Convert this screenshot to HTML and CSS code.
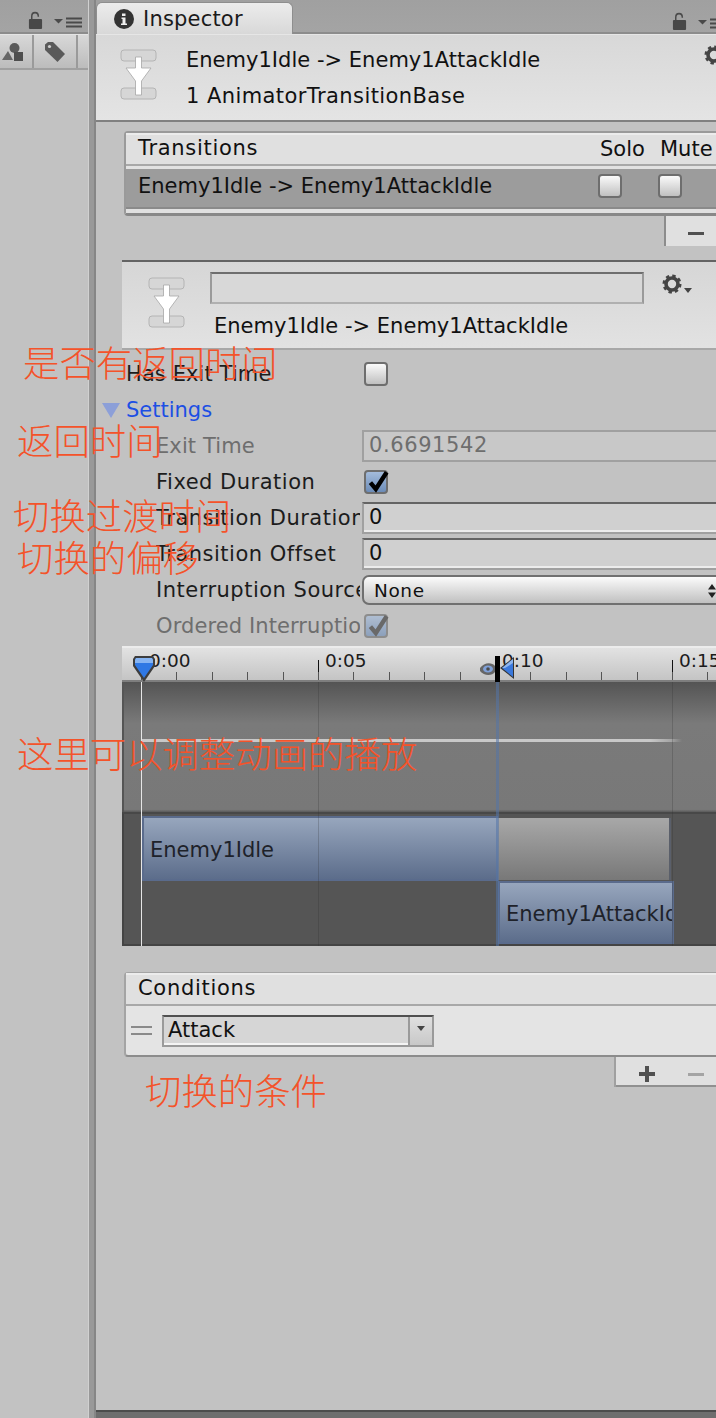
FILE: index.html
```html
<!DOCTYPE html>
<html lang="zh">
<head>
<meta charset="utf-8">
<title>Inspector</title>
<link rel="stylesheet" href="styles.css">
</head>
<body>
<svg class="defs" width="0" height="0" aria-hidden="true">
  <symbol id="lock" viewBox="0 0 16 20"><path d="M4 9V5.500C4 3 5.600 1.600 7.500 1.600S11 3 11 5.500V6" fill="none" stroke="#4a4a4a" stroke-width="1.600"/><rect x="1" y="8.500" width="14" height="10.500" rx="1" fill="#484848"/></symbol>
  <symbol id="menu" viewBox="0 0 28 12"><path d="M0 2h9L4.500 6.500z" fill="#4a4a4a"/><path d="M12 1.500h16M12 5.500h16M12 9.500h16" stroke="#4a4a4a" stroke-width="2"/></symbol>
  <symbol id="trans" viewBox="0 0 38 52"><rect x="1" y="1" width="35" height="11" rx="3" fill="#d6d6d6" stroke="#b4b4b4"/><rect x="1" y="39" width="35" height="11" rx="3" fill="#d6d6d6" stroke="#b4b4b4"/><path d="M6 19h9.500V8h6v11H31l-9.500 13v14h-6V32z" fill="#fff" stroke="#a6a6a6" stroke-width=".8"/></symbol>
  <symbol id="gear" viewBox="0 0 20 20"><circle cx="10" cy="10" r="6" fill="none" stroke="#444" stroke-width="3.600"/><circle cx="10" cy="10" r="8.200" fill="none" stroke="#444" stroke-width="2.600" stroke-dasharray="3.400 3.040"/></symbol>
  <symbol id="tick" viewBox="0 0 24 24"><path d="M5 12.500l5 6L20 3" fill="none" stroke="currentColor" stroke-width="4"/></symbol>
</svg>

<div class="window">
  <aside class="left">
    <div class="bar left-bar">
      <svg class="ico-lock"><use href="#lock"/></svg>
      <svg class="ico-menu"><use href="#menu"/></svg>
    </div>
    <div class="toolbar">
      <div class="tool tool-a">
        <svg class="ico-tool" viewBox="0 0 22 20"><path d="M0 18l6-9 5 9z" fill="#666"/><circle cx="12.500" cy="6" r="5" fill="#5a5a5a"/><rect x="12" y="10" width="9" height="9" fill="#4e4e4e"/></svg>
      </div>
      <div class="tool tool-b">
        <svg class="ico-tool" viewBox="0 0 22 22"><path d="M1 3.500L4 1h5l12 12-7.500 8L1 9z" fill="#5a5a5a"/><circle cx="5.500" cy="5.500" r="1.600" fill="#d0d0d0"/></svg>
      </div>
    </div>
  </aside>

  <div class="divider"></div>

  <main class="inspector">
    <div class="bar tabs">
      <div class="tab">
        <svg class="ico-info" viewBox="0 0 20 20"><circle cx="10" cy="10" r="10" fill="#333"/><path d="M8 4.500h3.500v2.500H8zM7.500 8.500h4v6H13V16H7v-1.500h1.500v-4.500h-1z" fill="#eee"/></svg>
        <span class="tab-label">Inspector</span>
      </div>
      <div class="tab-tools">
        <svg class="ico-lock"><use href="#lock"/></svg>
        <svg class="ico-menu"><use href="#menu"/></svg>
      </div>
    </div>

    <header class="head">
      <svg class="ico-trans"><use href="#trans"/></svg>
      <div class="head-text">
        <div class="line">Enemy1Idle -&gt; Enemy1AttackIdle</div>
        <div class="line line-wide">1 AnimatorTransitionBase</div>
      </div>
      <svg class="ico-gear head-gear"><use href="#gear"/></svg>
    </header>

    <section class="list list-trans">
      <div class="list-head">
        <span class="list-title">Transitions</span>
        <span class="col col-solo">Solo</span>
        <span class="col col-mute">Mute</span>
      </div>
      <div class="list-row">
        <span class="line">Enemy1Idle -&gt; Enemy1AttackIdle</span>
        <span class="check check-solo"></span>
        <span class="check check-mute"></span>
      </div>
      <div class="list-end"></div>
    </section>
    <div class="foot foot-trans"><span class="minus"></span></div>

    <section class="sub">
      <svg class="ico-trans"><use href="#trans"/></svg>
      <div class="sub-main">
        <div class="sub-top">
          <div class="name-field"></div>
          <svg class="ico-gear"><use href="#gear"/></svg>
          <span class="gear-arrow"></span>
        </div>
        <div class="line">Enemy1Idle -&gt; Enemy1AttackIdle</div>
      </div>
    </section>

    <section class="form">
      <div class="row row-top"><span class="label">Has Exit Time</span><span class="check"></span></div>
      <div class="row row-fold"><span class="fold"></span><span class="settings">Settings</span></div>
      <div class="row"><span class="label off">Exit Time</span><div class="field field-off">0.6691542</div></div>
      <div class="row"><span class="label">Fixed Duration</span><span class="check on"><svg class="ico-tick"><use href="#tick"/></svg></span></div>
      <div class="row"><span class="label">Transition Duration</span><div class="field">0</div></div>
      <div class="row"><span class="label">Transition Offset</span><div class="field">0</div></div>
      <div class="row"><span class="label">Interruption Source</span><div class="popup">None<svg class="ico-updown" viewBox="0 0 8 14"><path d="M4 0l4 5.500H0zM4 14l4-5.500H0z" fill="#222"/></svg></div></div>
      <div class="row"><span class="label off">Ordered Interruption</span><span class="check on dim"><svg class="ico-tick"><use href="#tick"/></svg></span></div>
    </section>

    <section class="timeline">
      <div class="ruler">
        <span class="time t0">0:00</span>
        <span class="time t5">0:05</span>
        <span class="time t10">0:10</span>
        <span class="time t15">0:15</span>
        <span class="major m5"></span>
        <span class="major m15"></span>
        <div class="ticks"></div>
      </div>
      <div class="graph">
        <div class="wave"></div>
      </div>
      <div class="clips">
        <div class="track">
          <div class="clip clip-a">Enemy1Idle</div>
          <div class="blend"></div>
        </div>
        <div class="track track-b">
          <div class="clip clip-b">Enemy1AttackIdle</div>
        </div>
      </div>
      <span class="vline v5"></span>
      <span class="vline v15"></span>
      <span class="vline vblue"></span>
      <span class="vline vwhite"></span>
      <svg class="playhead" viewBox="0 0 24 28"><path d="M3 1h18l2 3v7L12 27 1 11V4z" fill="#3d3d3d"/><path d="M4 3h16l1 2v5l-9 13L3 10V5z" fill="#2f78e4"/><path d="M4 3h16l1 2v3H3V5z" fill="#86b4f2"/></svg>
      <svg class="marker" viewBox="0 0 34 26"><path d="M0 12c4-6 12-6 15-2v6c-3 4-11 4-15-1z" fill="#666"/><ellipse cx="8" cy="13" rx="5" ry="3.500" fill="#7fa0d8"/><circle cx="8" cy="13" r="1.800" fill="#4a4a4a"/><path d="M34 1v22L20 12z" fill="#333"/><path d="M33 3v18L22 12z" fill="#3a78dc"/><path d="M33 3v4l-8 5-3 0z" fill="#8db5ef"/><rect x="15" y="0" width="5" height="26" fill="#000"/></svg>
    </section>

    <section class="list list-cond">
      <div class="list-head"><span class="list-title">Conditions</span></div>
      <div class="cond-row">
        <span class="handle"></span>
        <div class="combo">
          <span class="combo-text">Attack</span>
          <span class="combo-btn"><span class="combo-arrow"></span></span>
        </div>
      </div>
    </section>
    <div class="foot foot-cond">
      <svg class="ico-plus" viewBox="0 0 18 18"><path d="M7 1h4v6h6v4h-6v6H7v-6H1V7h6z" fill="#505050"/></svg>
      <span class="minus minus-off"></span>
    </div>

    <div class="spacer"></div>
    <div class="status"></div>
  </main>

  <span class="note n1">是否有返回时间</span>
  <span class="note n2">返回时间</span>
  <span class="note n3">切换过渡时间</span>
  <span class="note n4">切换的偏移</span>
  <span class="note n5">这里可以调整动画的播放</span>
  <span class="note n6">切换的条件</span>
</div>
</body>
</html>
```
FILE: styles.css
```css
* { box-sizing: border-box; }
html, body { margin: 0; padding: 0; }
body {
  width: 716px;
  height: 1418px;
  overflow: hidden;
  background: #c2c2c2;
  font-family: "DejaVu Sans", "Noto Sans CJK SC", sans-serif;
  font-size: 21px;
  color: #111;
}
.defs { position: absolute; }
.window { position: relative; display: flex; width: 716px; height: 1418px; overflow: hidden; }

.bar { height: 34px; background: linear-gradient(#a0a0a0, #a4a4a4); display: flex; }

/* left panel */
.left { width: 88px; flex: none; display: flex; flex-direction: column; background: #c2c2c2; }
.left-bar { align-items: flex-end; padding: 0 6px 2px 28px; justify-content: space-between; border-bottom: 2px solid #8c8c8c; }
.ico-lock { width: 15px; height: 19px; display: block; flex: none; }
.ico-menu { width: 28px; height: 12px; display: block; flex: none; margin-bottom: 1px; }
.toolbar {
  height: 36px; display: flex; justify-content: flex-end;
  background: linear-gradient(#d8d8d8, #bcbcbc);
  border-top: 1px solid #e4e4e4;
  border-bottom: 2px solid #a0a0a0;
  padding-right: 10px;
}
.tool { width: 44px; height: 100%; display: flex; align-items: center; justify-content: center; border-right: 2px solid #9a9a9a; flex: none; }
.tool-a { width: 33px; justify-content: flex-start; padding-left: 1px; }
.ico-tool { width: 22px; height: 22px; display: block; }

.divider {
  width: 8px; flex: none;
  background: linear-gradient(90deg, #d0d0d0 0 1px, #999 1px 6px, #868686 6px 8px);
}

/* inspector */
.inspector { flex: 1; min-width: 0; display: flex; flex-direction: column; overflow: hidden; }
.tabs { position: relative; justify-content: space-between; border-bottom: 2px solid #8c8c8c; }
.tab {
  width: 197px; height: 32px; margin-top: 2px; padding-left: 17px;
  display: flex; align-items: center; gap: 9px; flex: none;
  background: linear-gradient(#ececec, #d8d8d8);
  border: 1px solid #8e8e8e; border-bottom: none;
  border-radius: 6px 6px 0 0;
}
.ico-info { width: 20px; height: 20px; display: block; flex: none; }
.tab-label { letter-spacing: .2px; color: #1a1a1a; line-height: 28px; }
.tab-tools { width: 44px; display: flex; align-items: flex-end; gap: 11px; padding-bottom: 1px; flex: none; }

.line { line-height: 36px; white-space: nowrap; letter-spacing: .02px; }
.line-wide { letter-spacing: .42px; }
.head {
  position: relative; height: 88px; flex: none; display: flex;
  padding: 7px 0 0 24px; gap: 28px;
  background: linear-gradient(#d8d8d8, #e4e4e4);
  border-top: 1px solid #e6e6e6;
  border-bottom: 2px solid #808080;
}
.ico-trans { width: 38px; height: 52px; display: block; flex: none; }
.head .ico-trans { margin-top: 7px; }
.ico-gear { width: 20px; height: 20px; display: block; flex: none; }
.head-gear { position: absolute; right: -8px; top: 10px; }

.list { flex: none; margin-left: 28px; width: 640px; }
.list-trans {
  margin-top: 9px; border: 2px solid #9a9a9a; border-right: none; border-bottom: 3px solid #888;
  border-radius: 4px 0 0 4px; background: #e2e2e2;
}
.list-head {
  height: 33px; display: flex; align-items: center; position: relative; padding: 0 0 3px 12px;
  background: #e0e0e0; border-top: 2px solid #ececec; border-bottom: 2px solid #a8a8a8;
}
.list-title { letter-spacing: .7px; }
.col { position: absolute; top: 0; line-height: 29px; }
.col-solo { left: 474px; }
.col-mute { left: 534px; }
.list-row {
  height: 40px; margin-top: 3px; padding: 0 0 4px 12px; position: relative; display: flex; align-items: center;
  background: #9c9c9c; border-bottom: 2px solid #8a8a8a;
}
.list-end { height: 4px; background: #e0e0e0; }
.check {
  width: 24px; height: 24px; display: block; flex: none;
  background: linear-gradient(#fafafa, #c0c0c0);
  border: 2px solid #6e6e6e; border-radius: 4px;
}
.check-solo, .check-mute { position: absolute; top: 5px; }
.check-solo { left: 472px; }
.check-mute { left: 532px; }
.check.on { background: linear-gradient(#a4bcdc, #6c8cb8); color: #000; position: relative; }
.check.dim { opacity: .62; color: #333; }
.ico-tick { position: absolute; left: -1px; top: -3px; width: 26px; height: 26px; display: block; }

.foot { flex: none; align-self: flex-end; background: #e0e0e0; position: relative; display: flex; align-items: center; }
.foot-trans { width: 50px; height: 30px; padding: 5px 0 0 22px; box-shadow: -2px 0 0 #8c8c8c; }
.minus { width: 16px; height: 3px; background: #505050; display: block; flex: none; }
.minus-off { background: #a4a4a4; }

.sub {
  margin: 14px 0 0 26px; height: 90px; width: 600px; flex: none; display: flex;
  padding: 15px 0 0 26px; gap: 24px;
  background: linear-gradient(#d6d6d6, #e2e2e2);
  border-top: 2px solid #636363; border-bottom: 2px solid #a8a8a8;
}
.sub .ico-trans { margin-top: 0; }
.sub-main { display: flex; flex-direction: column; }
.sub-top { display: flex; align-items: flex-start; margin-top: -5px; height: 36px; position: relative; }
.name-field {
  width: 434px; height: 32px; background: #d8d8d8;
  border: 2px solid #9a9a9a; border-top-color: #6e6e6e; border-bottom-color: #b0b0b0;
}
.sub-top .ico-gear { margin: 2px 0 0 18px; }
.gear-arrow { width: 0; height: 0; margin: 16px 0 0 2px; border: 4px solid transparent; border-top: 5px solid #444; border-bottom: 0; }
.sub .line { padding-left: 4px; }

.form { margin-top: 6px; flex: none; display: flex; flex-direction: column; }
.row { height: 36px; display: flex; align-items: center; flex: none; padding-left: 60px; }
.row-top { padding-left: 30px; }
.label { width: 204px; margin-right: 2px; flex: none; overflow: hidden; white-space: nowrap; color: #1c1c1c; letter-spacing: .5px; }
.row-top .label { width: 234px; letter-spacing: .1px; }
.row-fold { padding-left: 6px; }
.label.off { color: #6e6e6e; letter-spacing: .1px; }
.row .check { margin-left: 2px; }
.fold { width: 0; height: 0; border-left: 9px solid transparent; border-right: 9px solid transparent; border-top: 15px solid #8c9fd8; flex: none; }
.settings { margin-left: 6px; color: #1c4fe4; }
.field {
  width: 400px; height: 32px; flex: none; line-height: 27px; padding-left: 5px;
  background: #d0d0d0; color: #111;
  border: 2px solid #a0a0a0; border-top-color: #646464;
  box-shadow: inset 0 -2px 0 #ececec; letter-spacing: .2px;
}
.field-off { background: #c8c8c8; color: #6e6e6e; border-color: #a0a0a0; box-shadow: none; letter-spacing: .6px; }
.popup {
  width: 360px; height: 30px; flex: none; position: relative; display: flex; align-items: center; padding-left: 10px;
  font-size: 18.500px; letter-spacing: .6px;
  background: linear-gradient(#fbfbfb, #c0c0c0);
  border: 2px solid #707070; border-radius: 7px;
}
.ico-updown { position: absolute; right: 4px; top: 7px; width: 8px; height: 14px; }

/* timeline */
.timeline {
  position: relative; margin: 2px 0 0 26px; width: 620px; height: 300px; flex: none;
  display: flex; flex-direction: column;
}
.ruler {
  position: relative; height: 36px; flex: none;
  background: linear-gradient(#ececec 0 2px, #e2e2e2 2px, #c4c4c4);
  border-bottom: 2px solid #7e7e7e;
}
.time { position: absolute; top: 3px; font-size: 18.500px; line-height: 24px; color: #1c1c1c; }
.t0 { left: 27px; } .t5 { left: 203px; } .t10 { left: 380px; } .t15 { left: 557px; }
.major { position: absolute; top: 14px; bottom: 0; width: 1px; background: #111; }
.m5 { left: 196px; } .m15 { left: 550px; }
.ticks {
  position: absolute; left: 19px; right: 0; bottom: 0; height: 8px;
  background: repeating-linear-gradient(90deg, #555 0 1px, transparent 1px 35.400px);
}
.graph {
  position: relative; height: 130px; flex: none;
  background: linear-gradient(#545454, #7a7a7a 32%, #787878 98%, #5a5a5a);
  border-left: 2px solid #555;
}
.wave {
  position: absolute; left: 18px; width: 540px; top: 57px; height: 3px;
  background: linear-gradient(90deg, #c8c8c8 0 94%, #a4a4a4 98%, #7a7a7a);
}
.clips {
  flex: 1; min-height: 0; display: flex; flex-direction: column; background: #555; padding: 2px 0 0 18px;
  border-left: 2px solid #444; border-bottom: 2px solid #444; border-top: 2px solid #484848;
}
.track { height: 65px; display: flex; flex: none; }
.track-b { padding-left: 356px; height: 63px; }
.clip {
  display: flex; align-items: center; color: #1e222a; overflow: hidden; white-space: nowrap;
  background: linear-gradient(#97a6bd, #5c6d8b);
  border: 2px solid #5a6b8c;
  flex: none;
}
.clip-a { width: 356px; border-right: none; padding: 3px 0 0 6px; }
.clip-b { width: 176px; padding: 3px 0 0 6px; }
.blend {
  width: 173px; height: 62px; margin-top: 2px; flex: none;
  background: linear-gradient(#a8a8a8, #787878);
  border-right: 2px solid #5a5f6a;
}
.vline { position: absolute; top: 36px; bottom: 0; width: 1px; background: rgba(40,40,40,.22); }
.v5 { left: 196px; } .v15 { left: 550px; }
.vblue { left: 374px; width: 3px; background: rgba(84,116,168,.55); }
.vwhite { left: 19px; background: #e6e6e6; }
.playhead { position: absolute; left: 10px; top: 9px; width: 24px; height: 28px; }
.marker { position: absolute; left: 358px; top: 10px; width: 34px; height: 26px; }

/* conditions */
.list-cond {
  margin-top: 26px; height: 85px; background: #e4e4e4;
  border-top: 1px solid #a4a4a4; border-left: 2px solid #a4a4a4; border-bottom: 2px solid #8c8c8c;
  border-radius: 4px 0 0 4px;
}
.cond-row { display: flex; align-items: flex-start; padding: 9px 0 0 5px; }
.handle { width: 21px; height: 9px; margin-top: 11px; border-top: 2px solid #8a8a8a; border-bottom: 2px solid #8a8a8a; flex: none; }
.combo {
  margin-left: 10px; width: 272px; height: 32px; flex: none; display: flex;
  border: 2px solid #9a9a9a; border-top-color: #505050; background: #d6d6d6;
}
.combo-text { flex: 1; padding-left: 4px; line-height: 26px; box-shadow: inset 0 -2px 0 #f4f4f4; }
.combo-btn { width: 24px; flex: none; background: linear-gradient(#e0e0e0, #c8c8c8); border-left: 2px solid #9a9a9a; display: flex; justify-content: center; padding-top: 9px; }
.combo-arrow { width: 0; height: 0; border: 4px solid transparent; border-top: 5px solid #444; border-bottom: 0; }
.foot-cond {
  width: 100px; height: 30px; padding: 6px 0 0 22px; gap: 32px;
  border-bottom: 2px solid #909090; box-shadow: -2px 0 0 #a0a0a0;
}
.ico-plus { width: 18px; height: 18px; display: block; flex: none; }

.spacer { flex: 1; }
.status { height: 8px; flex: none; background: #6e6e6e; border-top: 2px solid #4c4c4c; }

/* annotations laid over the screenshot */
.note {
  position: absolute; font-family: "Noto Sans CJK SC", sans-serif; font-size: 36.400px; font-weight: 300;
  line-height: 44px; color: #f4532a; white-space: nowrap;
}
.n1 { left: 23px; top: 339px; }
.n2 { left: 17px; top: 417px; }
.n3 { left: 13px; top: 492px; }
.n4 { left: 17px; top: 534px; }
.n5 { left: 17px; top: 730px; }
.n6 { left: 145px; top: 1067px; }
```
